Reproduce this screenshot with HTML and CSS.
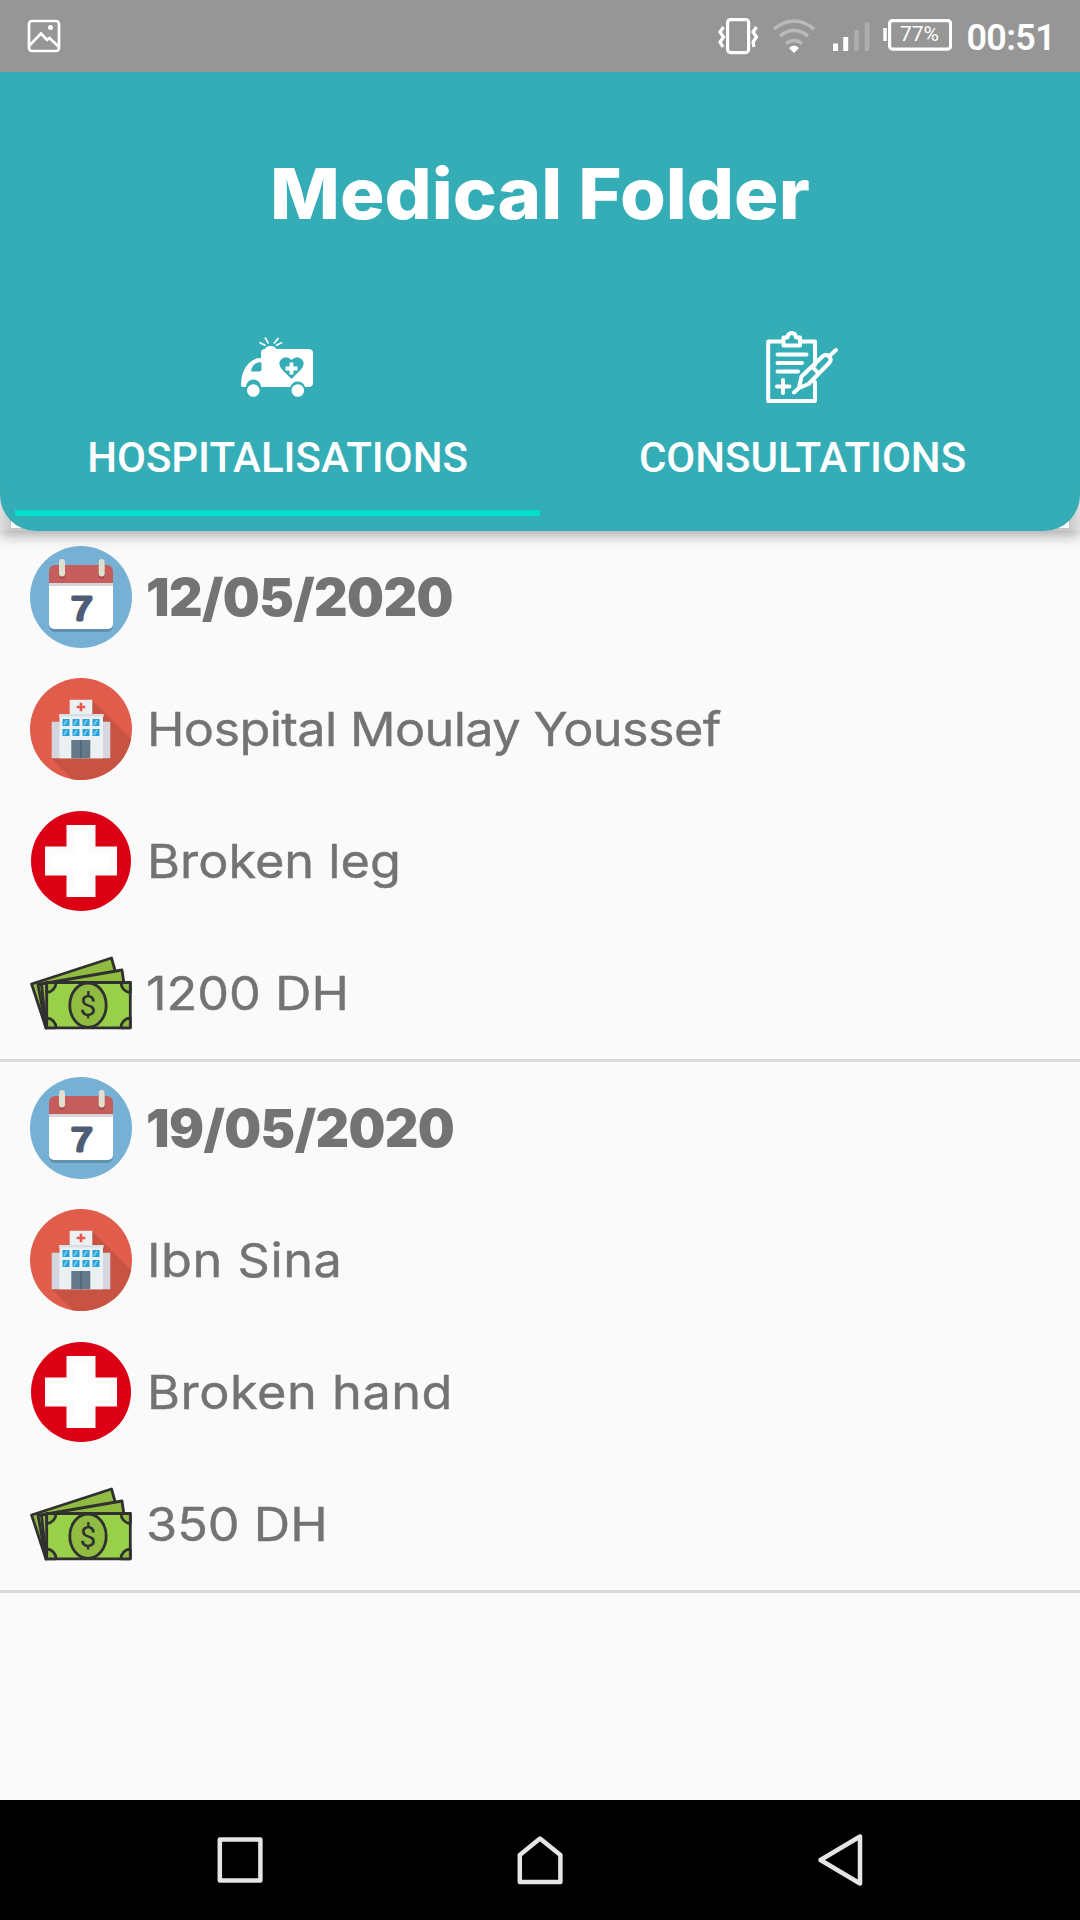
FILE: index.html
```html
<!DOCTYPE html>
<html lang="en">
<head>
<meta charset="utf-8">
<title>Medical Folder</title>
<link rel="stylesheet" href="styles.css">
</head>
<body>
<svg class="sprite" aria-hidden="true">
  <symbol id="calendar" viewBox="0 0 102 102">
    <circle cx="51" cy="51" r="51" fill="#76b1d5"/>
    <rect x="19" y="24" width="64" height="62" rx="6" fill="#5f91af"/>
    <path d="M19 36H83V78a5 5 0 0 1-5 5H24a5 5 0 0 1-5-5Z" fill="#fff"/>
    <path d="M19 37V25a6 6 0 0 1 6-6H77a6 6 0 0 1 6 6V37Z" fill="#c65d5d"/>
    <path d="M19 37H83V40H19Z" fill="#d5d6db"/>
    <path d="M32 17V30M71.700 17V30" stroke="#ad4c4f" stroke-width="6" stroke-linecap="round"/>
    <path d="M32 16V27.500M71.700 16V27.500" stroke="#e0e0d1" stroke-width="6" stroke-linecap="round"/>
    <text x="44" y="74.500" class="day" text-anchor="middle" transform="scale(1.180 1)">7</text>
  </symbol>
  <symbol id="hospital" viewBox="0 0 102 102">
    <circle cx="51" cy="51" r="51" fill="#e15c4a"/>
    <path d="M62 22L101.100 61.100A51 51 0 0 1 42.500 101.300L21.700 80.300Z" fill="#c95342"/>
    <path d="M21.700 43.700H80.300V80.300H21.700Z" fill="#d4d7df"/>
    <path d="M39.700 21.700H62.300V36H39.700ZM29.500 36H73V80.300H29.500Z" fill="#ebf0f3"/>
    <path d="M29 36H73.700V38.500H29Z" fill="#d9dee3"/>
    <path d="M51 24.700V33.300M46.700 29H55.300" stroke="#e9574c" stroke-width="2.600"/>
    <path d="M32.500 41h7v7h-7zM42.500 41h7v7h-7zM52.500 41h7v7h-7zM62.500 41h7v7h-7zM32.500 51h7v7h-7zM42.500 51h7v7h-7zM52.500 51h7v7h-7zM62.500 51h7v7h-7z" fill="#27a2db"/>
    <path d="M34 47l3-5M44 47l3-5M54 47l3-5M64 47l3-5M34 57l3-5M44 57l3-5M54 57l3-5M64 57l3-5" stroke="#7ccdf0" stroke-width="1.600"/>
    <path d="M41.300 62H60.300V80.300H41.300Z" fill="#64798a"/>
    <path d="M50.800 62V80.300" stroke="#4d6275" stroke-width="1.400"/>
  </symbol>
  <symbol id="cross" viewBox="0 0 102 102">
    <circle cx="51" cy="51" r="50" fill="#dc0014"/>
    <path d="M36.500 15h29v21.500H87v29H65.500V87h-29V65.500H15v-29H36.500Z" fill="#fbfbfb"/>
    <path d="M43.500 22h15v21.500H80v15H58.500V80h-15V58.500H22v-15H43.500Z" fill="#fff"/>
  </symbol>
  <symbol id="money" viewBox="0 0 102 102">
    <g fill="#8fbc41" stroke="#303030" stroke-width="2.800" stroke-linejoin="round">
      <path d="M1.600 42L81.500 16L94 60L16 86Z"/>
      <path d="M8 42.500L92 28L98 70L16 86Z"/>
      <path d="M11.500 42.500L16 84" />
      <path d="M16.700 40.500H100.300V85.800H16.700Z" fill="#98d04a"/>
      <path d="M16.700 50.500A10 10 0 0 0 26 40.500H16.700ZM91 40.500A10 10 0 0 0 100.300 50.500V40.500ZM16.700 75.800A10 10 0 0 1 26 85.800H16.700ZM91 85.800A10 10 0 0 1 100.300 75.800V85.800Z"/>
      <ellipse cx="58" cy="63.200" rx="18.200" ry="22.200"/>
    </g>
    <text x="58" y="73.500" class="dollar" text-anchor="middle">$</text>
  </symbol>
</svg>

<div class="status">
  <svg class="status-left" width="34" height="34" viewBox="0 0 34 34" fill="none" stroke="#fff" stroke-width="2.700">
    <rect x="2" y="2" width="30" height="30" rx="3"/>
    <path d="M2 27L14 14.500L20 21L22.500 19L32 28" />
    <circle cx="23.500" cy="8.500" r="2.500" fill="#fff" stroke="none"/>
  </svg>
  <svg width="236" height="72" viewBox="716 0 236 72" fill="none" stroke="#fff" stroke-width="3.200">
    <rect x="727.600" y="19.600" width="21" height="33" rx="3"/>
    <path d="M723.500 27L720 32L723.500 37L720 42L723 47M756.500 27L753 32L756.500 37L753 42L754 47"/>
    <g stroke="#b9b9b9" stroke-width="3.600">
      <path d="M774 29Q794 13 814 29M780 36Q794 25 808 36M786 43.500Q794 37.500 802 43.500"/>
      <path d="M856.500 30V51M867 22.500V51" stroke="#adadad" stroke-width="4.600"/>
    </g>
    <path d="M789 48Q794 43 799 48L794 53Z" fill="#fff" stroke="none"/>
    <path d="M835.500 43.500V51M845.700 37V51" stroke-width="5"/>
    <path d="M885 28V41" stroke-width="3.500"/>
    <rect x="889.600" y="20.600" width="61" height="28.500" rx="3"/>
    <text x="900" y="41" class="battery">77%</text>
  </svg>
  <span class="clock">00:51</span>
</div>

<header class="header-backdrop">
  <div class="header">
    <h1><span>Medical Folder</span></h1>
    <nav class="tabs">
      <a class="tab active">
        <svg width="72" height="72" viewBox="0 0 72 72">
          <path d="M5 62H1.500Q0 62 0 60Q0 46 8 38Q13 33 20 33V28Q20 24 24 24Q25 21 29.500 21Q34 21 35 24H67Q72 24 72 28V58Q72 62 67 62H64A7.500 7.500 0 0 0 49.500 62H20A7.500 7.500 0 0 0 5 62Z" transform="translate(0 -6)" fill="#fff"/>
          <circle cx="12.300" cy="59.500" r="7.800" fill="#34adb7"/><circle cx="56.800" cy="59.500" r="7.800" fill="#34adb7"/>
          <circle cx="12.300" cy="59.500" r="6.300" fill="#fff"/><circle cx="56.800" cy="59.500" r="6.300" fill="#fff"/>
          <path d="M10 46.500Q11 38 19 37Q20.500 37 20.500 39V44.500Q20 46.500 18 46.500Z" transform="translate(0 -6)" fill="#34adb7"/>
          <path d="M50.500 48L41.500 39Q36 33 40 28.500Q45.500 24 50.500 29Q55.500 24 61 28.500Q65 33 59.500 39Z" fill="#34adb7"/>
          <path d="M50.500 31.500V43.500M44.500 37.500H56.500" stroke="#fff" stroke-width="3.800"/>
          <path d="M27.500 12.500L24 6.500M33 12.500L37.500 7M24.500 14.500L18.500 11.500M35 14.500L41 11.500" stroke="#fff" stroke-width="1.700"/>
        </svg>
        <span>HOSPITALISATIONS</span>
      </a>
      <a class="tab">
        <svg width="72" height="72" viewBox="0 0 72 72" fill="none" stroke="#fff" stroke-width="4" stroke-linecap="round" stroke-linejoin="round">
          <path d="M17 10.500H2.200V70H49V51M49 34V10.500H35"/>
          <path d="M17.500 14.500V6.500H21.500Q22 2 25.700 2Q29.500 2 30 6.500H34V14.500Z"/>
          <path d="M11.500 23.500H40.500M11.500 32H36M11.500 40.500H32M17 49V62M11 55.500H23.500"/>
          <path d="M28 61.500L33 57L35.500 45.500L57 25Q60 22.500 63 25.500Q66 28 63.500 31.500L42.500 53L33 57M47 36.500L52 42M64 24.500L70 19" />
        </svg>
        <span>CONSULTATIONS</span>
      </a>
    </nav>
  </div>
</header>

<main class="records">
  <article class="record">
    <div class="row date"><svg><use href="#calendar"/></svg><span>12/05/2020</span></div>
    <div class="row tight"><svg><use href="#hospital"/></svg><span>Hospital Moulay Youssef</span></div>
    <div class="row"><svg><use href="#cross"/></svg><span>Broken leg</span></div>
    <div class="row amount"><svg><use href="#money"/></svg><span>1200 DH</span></div>
  </article>
  <article class="record">
    <div class="row date"><svg><use href="#calendar"/></svg><span>19/05/2020</span></div>
    <div class="row loose"><svg><use href="#hospital"/></svg><span>Ibn Sina</span></div>
    <div class="row loose"><svg><use href="#cross"/></svg><span>Broken hand</span></div>
    <div class="row amount"><svg><use href="#money"/></svg><span>350 DH</span></div>
  </article>
</main>

<nav class="system-nav">
  <svg width="60" height="60" viewBox="0 0 60 60"><rect x="9.800" y="9.600" width="40.600" height="40.800"/></svg>
  <svg width="60" height="60" viewBox="0 0 60 60"><path d="M9.800 52V25L30 8.500L50.400 25V52Z"/></svg>
  <svg width="60" height="60" viewBox="0 0 60 60"><path d="M50 6.500V53.500L10.500 30Z"/></svg>
</nav>
</body>
</html>
```
FILE: styles.css
```css
* { box-sizing: border-box; }

body {
  margin: 0;
  width: 1080px;
  height: 1920px;
  display: flex;
  flex-direction: column;
  background: #fafafa;
  color: #737373;
  font-family: Inter, "Open Sans", sans-serif;
  overflow: hidden;
}

.sprite { display: none; }

.status {
  position: relative;
  z-index: 1;
  height: 72px;
  flex: none;
  display: flex;
  align-items: center;
  padding: 0 25px 0 27px;
  background: #969696;
  color: #fff;
  font-family: Roboto, sans-serif;
}
.status-left { margin-right: auto; }
.clock {
  width: 91px;
  margin-left: 12px;
  text-align: right;
  font-size: 36px;
  font-weight: 600;
  letter-spacing: -.7px;
  line-height: 68px;
  padding-top: 4px;
}
.battery {
  font: 400 21px Roboto, sans-serif;
  fill: #fff;
  stroke: none;
}

/* Header card with rounded lower corners over its drop shadow */
.header-backdrop {
  flex: none;
  height: 459px;
  background:
    linear-gradient(#fff, #fff) 11px 0 / 1058px 456px no-repeat,
    linear-gradient(to right, #dedede, #c8c8c8 11px, #c8c8c8 1069px, #dedede);
  box-shadow: 0 3px 14px rgba(0, 0, 0, .38);
}
.header {
  height: 100%;
  display: flex;
  flex-direction: column;
  background: #34adb7;
  border-radius: 0 0 36px 36px;
  color: #fff;
}
h1 {
  margin: 0;
  padding-top: 77px;
  height: 259px;
  text-align: center;
  font-size: 70px;
  font-weight: 800;
  line-height: 90px;
}
h1 span {
  display: inline-block;
  transform: scaleX(1.059);
}

.tabs {
  display: grid;
  grid-template-columns: 1fr 1fr;
  margin: 0 15px;
  height: 185px;
}
.tab {
  display: flex;
  flex-direction: column;
  align-items: center;
  gap: 30px;
  font: 500 42px/50px Roboto, sans-serif;
}
.tab svg { margin-right: 2px; }
.tab.active { border-bottom: 6px solid #00dfcb; }

.records { flex: 1; }
.record {
  display: flex;
  flex-direction: column;
  gap: 30px;
  padding: 15px 30px;
  height: 531px;
  border-bottom: 3px solid #dadada;
}
.row {
  display: flex;
  align-items: center;
  gap: 15px;
  height: 102px;
  font-size: 47px;
  line-height: 60px;
}
.row svg { width: 102px; height: 102px; flex: none; }
.row span {
  transform: scaleX(1.073);
  transform-origin: left center;
  white-space: nowrap;
  -webkit-text-stroke: .4px currentColor;
}
.tight { letter-spacing: -.6px; }
.loose { letter-spacing: .5px; }
.amount { gap: 14px; }

.date {
  gap: 14px;
  font-size: 52px;
  font-weight: 900;
  letter-spacing: -.6px;
}
.date span {
  transform: none;
  padding-top: 2px;
  -webkit-text-stroke: 0;
}

.day {
  font: 400 33px "Liberation Sans", sans-serif;
  letter-spacing: 0;
  fill: #4e5d75;
  stroke: #4e5d75;
  stroke-width: 3px;
  stroke-linejoin: round;
}
.dollar {
  font: 400 30px Roboto, sans-serif;
  letter-spacing: 0;
  fill: #303030;
}

.system-nav {
  flex: none;
  height: 120px;
  display: grid;
  grid-template-columns: repeat(3, 300px);
  justify-content: center;
  place-items: center;
  background: #000;
  fill: none;
  stroke: #e5e5e5;
  stroke-width: 4.500;
  stroke-linejoin: round;
}
```
